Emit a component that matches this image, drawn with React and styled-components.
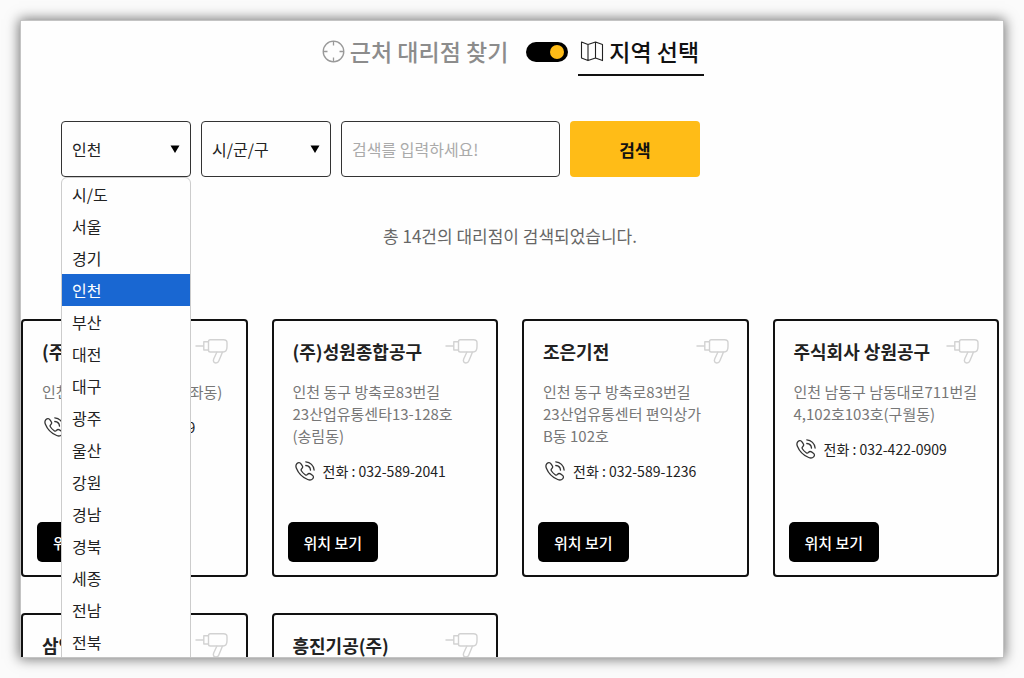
import React, { useState } from "react";
import styled, { createGlobalStyle } from "styled-components";

const GlobalStyle = createGlobalStyle`
  * {
    box-sizing: border-box;
  }
  body {
    margin: 0;
    background: #fbfbfb;
    color: #222;
  }
  body, button, input, select {
    font-family: "Noto Sans CJK KR", "Noto Sans", sans-serif;
  }
`;

const Page = styled.div`
  display: flex;
  height: 100vh;
  padding: 20px;
`;

const Frame = styled.main`
  flex: 1;
  min-width: 0;
  overflow: hidden;
  background: #fefefe;
  border: 1px solid #c4c4c4;
  box-shadow: 0 0 12px 1px rgba(0, 0, 0, 0.55);
`;

const ModeBar = styled.header`
  display: flex;
  justify-content: center;
  padding-top: 13px;
`;

const ModeTab = styled.button`
  display: flex;
  align-items: center;
  gap: 5px;
  padding: 0 5px 6px 2px;
  border: 0;
  border-bottom: 2px solid ${({ $active }) => ($active ? "#111" : "transparent")};
  background: none;
  color: ${({ $active }) => ($active ? "#111" : "#8c8c8c")};
  font-size: 23px;
  font-weight: 500;
  line-height: 34px;
  cursor: pointer;
`;

const ModeSwitch = styled.input`
  appearance: none;
  display: flex;
  align-items: center;
  justify-content: ${({ checked }) => (checked ? "flex-end" : "flex-start")};
  width: 42px;
  height: 20px;
  margin: 8px 10px 0 13px;
  padding: 0 4px;
  border-radius: 10px;
  background: #000;
  cursor: pointer;

  &::before {
    content: "";
    width: 14px;
    height: 14px;
    border-radius: 50%;
    background: #ffbc17;
  }
`;

const SearchForm = styled.form`
  display: flex;
  gap: 10px;
  margin-top: 45px;
  padding: 0 40px;
`;

const SelectBox = styled.div`
  position: relative;
  width: 130px;
`;

const Select = styled.select`
  appearance: none;
  width: 100%;
  height: 56px;
  padding: 0 10px;
  border: 1px solid #333;
  border-radius: 4px;
  background: #fefefe;
  color: #222;
  font-size: 16px;
  cursor: pointer;
`;

const Arrow = styled.svg`
  position: absolute;
  top: 24px;
  right: 11px;
  pointer-events: none;
`;

const OptionList = styled.ul`
  position: absolute;
  z-index: 2;
  top: 100%;
  left: 0;
  width: 100%;
  margin: 0;
  padding: 0;
  overflow: hidden;
  list-style: none;
  border: 1px solid #ccc;
  border-radius: 6px 6px 0 0;
  background: #fefefe;
`;

const Option = styled.li`
  padding: 0 10px;
  background: ${({ $selected }) => ($selected ? "#1967d2" : "transparent")};
  color: ${({ $selected }) => ($selected ? "#fff" : "#222")};
  font-size: 16px;
  line-height: 32px;
  cursor: default;
`;

const Keyword = styled.input`
  width: 219px;
  height: 56px;
  padding: 0 10px;
  border: 1px solid #333;
  border-radius: 4px;
  background: #fefefe;
  font-size: 16px;

  &::placeholder {
    color: #aaa;
  }
`;

const SearchButton = styled.button`
  width: 130px;
  height: 56px;
  border: 0;
  border-radius: 4px;
  background: #ffbc17;
  color: #111;
  font-size: 17px;
  font-weight: 700;
  cursor: pointer;
`;

const Results = styled.section`
  padding-right: 4px;
`;

const Count = styled.p`
  margin: 46px 0 70px;
  color: #666;
  font-size: 17px;
  line-height: 26px;
  text-align: center;
`;

const CardGrid = styled.div`
  display: grid;
  grid-template-columns: repeat(4, 1fr);
  gap: 36px 24px;
`;

const Card = styled.article`
  display: flex;
  flex-direction: column;
  min-height: 258px;
  padding: 16px 8px 13px 14px;
  border: 2px solid #111;
  border-radius: 4px;
`;

const CardTop = styled.div`
  display: flex;
  align-items: center;
  justify-content: space-between;
  padding: 0 10px 0 5px;
`;

const StoreName = styled.h2`
  margin: 0;
  font-size: 18px;
  font-weight: 700;
  line-height: 28px;
  white-space: nowrap;
`;

const Address = styled.p`
  margin: 16px 0 13px;
  padding-left: 5px;
  color: #777;
  font-size: 15px;
  line-height: 22px;
  word-break: keep-all;
`;

const Phone = styled.div`
  display: flex;
  align-items: center;
  gap: 8px;
  padding-left: 7px;
  font-size: 14px;
  line-height: 22px;
`;

const MapButton = styled.button`
  align-self: flex-start;
  height: 40px;
  margin-top: auto;
  padding: 0 16px;
  border: 0;
  border-radius: 5px;
  background: #000;
  color: #fff;
  font-size: 15px;
  font-weight: 500;
  cursor: pointer;
`;

const regions = [
  "시/도", "서울", "경기", "인천", "부산", "대전", "대구", "광주",
  "울산", "강원", "경남", "경북", "세종", "전남", "전북",
];

const stores = [
  { name: "(주)한일종합공구", address: "인천 서구 봉수대로 7(가좌동)", phone: "032-584-2119" },
  { name: "(주)성원종합공구", address: "인천 동구 방축로83번길 23산업유통센타13-128호 (송림동)", phone: "032-589-2041" },
  { name: "조은기전", address: "인천 동구 방축로83번길 23산업유통센터 편익상가 B동\u00a0102호", phone: "032-589-1236" },
  { name: "주식회사 상원공구", address: "인천 남동구 남동대로711번길 4,102호103호(구월동)", phone: "032-422-0909" },
  { name: "삼영공구", address: "인천 서구 가좌로 12(가좌동)", phone: "032-578-3320" },
  { name: "흥진기공(주)", address: "인천 동구 방축로83번길 23", phone: "032-589-4410" },
];

const TargetIcon = () => (
  <svg width="23" height="23" viewBox="0 0 23 23" fill="none" stroke="#999" strokeWidth="1.3" aria-hidden="true">
    <circle cx="11.5" cy="11.5" r="10.3" />
    <path d="M11.5 1v4.5M11.5 17.5V22M1 11.5h4.5M17.5 11.5H22" />
  </svg>
);

const MapIcon = () => (
  <svg width="24" height="23" viewBox="0 0 24 23" fill="none" stroke="#222" strokeWidth="1.1" strokeLinejoin="round" aria-hidden="true">
    <path d="M1.5 2l6.5 2.6L15.5 2l7 2.6v16l-7-2.6L8 20.6 1.5 18zM8 4.6v16M15.5 2v16" />
  </svg>
);

const DrillIcon = () => (
  <svg width="33" height="26" viewBox="0 0 33 26" fill="none" stroke="#d2d2d2" strokeWidth="1.4" strokeLinejoin="round" strokeLinecap="round" aria-hidden="true">
    <path d="M1 8h7.500M13.500 3.800H8.800v8.200h4.700" />
    <path d="M15.300 1.800h13.200c2.200 0 3.500 1 3.500 3v4c0 3.500-1.500 5.200-4 5.200H15.300a1.800 1.800 0 0 1-1.800-1.800V3.600a1.800 1.800 0 0 1 1.800-1.800z" />
    <path d="M21.800 14.200l-3.100 6.800c-.9 2.300.2 4 2.100 4 1.600 0 2.500-.7 3.100-2.300l3.500-8.500" />
  </svg>
);

const PhoneIcon = () => (
  <svg width="20" height="20" viewBox="0 0 20 20" fill="none" stroke="#333" strokeWidth="1.3" strokeLinecap="round" strokeLinejoin="round" aria-hidden="true">
    <path d="M2 2.500C3.300 1.300 5 1.400 6 2.800l1.200 1.900c.8 1.200.5 2.200-.5 3-.8.700-.8 1.400-.2 2.300 1 1.500 2.200 2.700 3.700 3.700.9.600 1.600.5 2.300-.3.800-1 1.900-1.200 3-.5l1.900 1.300c1.300.9 1.400 2.500.2 3.700-1.200 1.200-2.900 1.400-4.900.6C7 16.100 3.500 12.500 1.400 7.200.6 5.300.8 3.700 2 2.500z" />
    <path d="M10.800.9c4.400.2 8 3.700 8.300 8.100M10.800 4.500c2.500.2 4.500 2.100 4.700 4.600" />
  </svg>
);

const DownArrow = () => (
  <Arrow width="10" height="8" viewBox="0 0 10 8" aria-hidden="true">
    <path d="M.5.5h9L5 8z" fill="#000" />
  </Arrow>
);

function StoreCard({ store }) {
  return (
    <Card>
      <CardTop>
        <StoreName>{store.name}</StoreName>
        <DrillIcon />
      </CardTop>
      <Address>{store.address}</Address>
      <Phone>
        <PhoneIcon />
        <span>전화 : {store.phone}</span>
      </Phone>
      <MapButton type="button">위치 보기</MapButton>
    </Card>
  );
}

export default function App() {
  const [byRegion, setByRegion] = useState(true);
  const [region, setRegion] = useState("인천");
  const [open, setOpen] = useState(true);
  const [keyword, setKeyword] = useState("");

  const pickRegion = (name) => {
    setRegion(name);
    setOpen(false);
  };

  return (
    <Page>
      <GlobalStyle />
      <Frame>
        <ModeBar>
          <ModeTab type="button" $active={!byRegion} onClick={() => setByRegion(false)}>
            <TargetIcon />
            근처 대리점 찾기
          </ModeTab>
          <ModeSwitch
            type="checkbox"
            aria-label="지역 선택"
            checked={byRegion}
            onChange={(e) => setByRegion(e.target.checked)}
          />
          <ModeTab type="button" $active={byRegion} onClick={() => setByRegion(true)}>
            <MapIcon />
            지역 선택
          </ModeTab>
        </ModeBar>

        <SearchForm onSubmit={(e) => e.preventDefault()}>
          <SelectBox>
            <Select
              aria-label="시/도"
              value={region}
              onChange={(e) => setRegion(e.target.value)}
              onMouseDown={(e) => {
                e.preventDefault();
                setOpen(!open);
              }}
            >
              {regions.map((name) => <option key={name}>{name}</option>)}
            </Select>
            <DownArrow />
            {open ? (
              <OptionList role="listbox" aria-label="시/도">
                {regions.map((name) => (
                  <Option
                    key={name}
                    role="option"
                    aria-selected={name === region}
                    $selected={name === region}
                    onClick={() => pickRegion(name)}
                  >
                    {name}
                  </Option>
                ))}
              </OptionList>
            ) : null}
          </SelectBox>
          <SelectBox>
            <Select aria-label="시/군/구">
              <option>시/군/구</option>
            </Select>
            <DownArrow />
          </SelectBox>
          <Keyword
            type="text"
            aria-label="검색어"
            placeholder="검색를 입력하세요!"
            value={keyword}
            onChange={(e) => setKeyword(e.target.value)}
          />
          <SearchButton type="submit">검색</SearchButton>
        </SearchForm>

        <Results>
          <Count>총 14건의 대리점이 검색되었습니다.</Count>
          <CardGrid>
            {stores.map((store) => <StoreCard key={store.name} store={store} />)}
          </CardGrid>
        </Results>
      </Frame>
    </Page>
  );
}
